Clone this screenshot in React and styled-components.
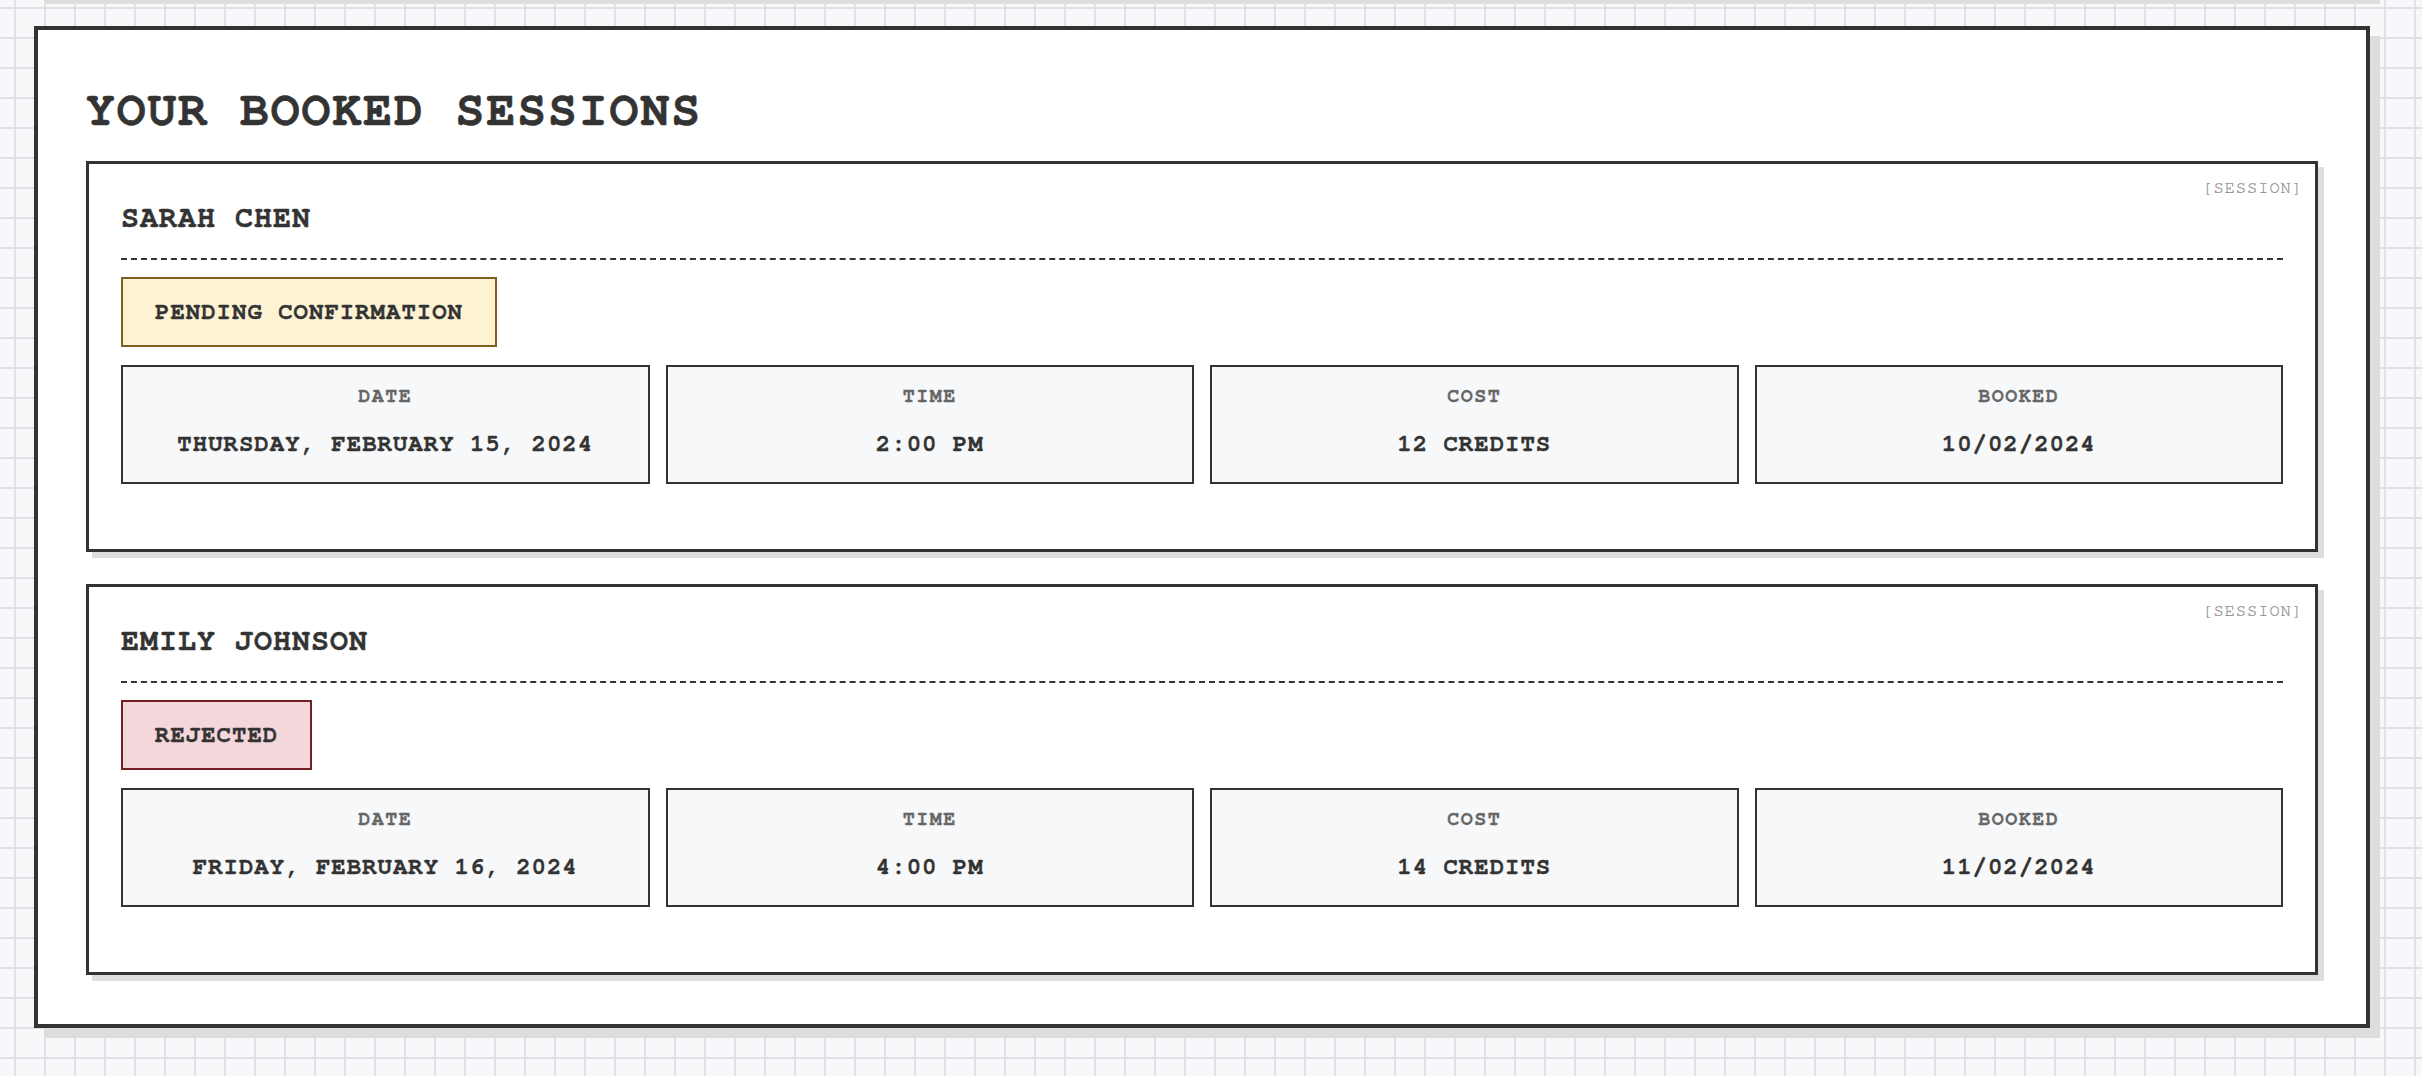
import React from "react";
import styled, { createGlobalStyle } from "styled-components";

const GlobalStyle = createGlobalStyle`
  html, body {
    margin: 0;
    padding: 0;
  }
  body {
    background-color: #f7f8fa;
    background-image:
      linear-gradient(to bottom, #dfe1e5 2px, transparent 2px),
      linear-gradient(to right, #dfe1e5 2px, transparent 2px);
    background-size: 30px 30px;
    background-position: 14px 7px;
    font-family: "Nimbus Mono PS", "Nimbus Mono L", FreeMono, "Courier New", Courier, "Liberation Mono", monospace;
    color: #333;
    overflow: hidden;
  }
`;

const Page = styled.div`
  display: flex;
  flex-direction: column;
  gap: 32px;
  padding: 0 52px 40px 34px;
  margin-top: -214px;
`;

const Panel = styled.section`
  box-sizing: border-box;
  background: #fff;
  border: 4px solid #333;
  box-shadow: 10px 10px 0 #ddd;
  padding: 48px 48px 49px;
  min-height: ${(p) => (p.$height ? `${p.$height}px` : "auto")};
`;

const Title = styled.h2`
  margin: 0 0 17px;
  font-size: 48px;
  line-height: 66px;
  font-weight: 700;
  letter-spacing: 2px;
  text-transform: uppercase;
  -webkit-text-stroke: 0.6px #333;
`;

const CardList = styled.div`
  display: flex;
  flex-direction: column;
  gap: 32px;
`;

const Card = styled.article`
  position: relative;
  background: #fff;
  border: 3px solid #333;
  box-shadow: 6px 6px 0 #ddd;
  padding: 32px;
  display: flex;
  flex-direction: column;
  align-items: flex-start;
`;

const Tag = styled.span`
  position: absolute;
  top: 14px;
  right: 12px;
  font-size: 17px;
  line-height: 20px;
  letter-spacing: 1px;
  color: #8c8c8c;
  -webkit-text-stroke: 0.2px #8c8c8c;
`;

const CardHeader = styled.div`
  align-self: stretch;
  padding-bottom: 18px;
  border-bottom: 2px dashed #333;
  margin-bottom: 17px;
`;

const Name = styled.h3`
  margin: 0;
  font-size: 30px;
  line-height: 44px;
  font-weight: 700;
  letter-spacing: 1px;
  text-transform: uppercase;
  -webkit-text-stroke: 0.4px #333;
`;

const Badge = styled.div`
  padding: 18px 32px;
  font-size: 24px;
  line-height: 30px;
  font-weight: 700;
  letter-spacing: 1px;
  text-transform: uppercase;
  color: #333;
  -webkit-text-stroke: 0.35px #333;
  border: 2px solid ${(p) => (p.$status === "rejected" ? "#722026" : "#806020")};
  background: ${(p) => (p.$status === "rejected" ? "#f3d7da" : "#fdf3d3")};
  margin-bottom: 18px;
`;

const DetailsGrid = styled.div`
  align-self: stretch;
  display: grid;
  grid-template-columns: repeat(4, 1fr);
  gap: 16px;
  margin-bottom: 33px;
`;

const Detail = styled.div`
  border: 2px solid #333;
  background: #f7f8fa;
  padding: 17px 16px 22px;
  text-align: center;
`;

const Label = styled.div`
  font-size: 20px;
  line-height: 24px;
  font-weight: 700;
  letter-spacing: 1.5px;
  color: #666;
  -webkit-text-stroke: 0.3px #666;
  text-transform: uppercase;
  margin-bottom: 20px;
`;

const Value = styled.div`
  font-size: 24px;
  line-height: 32px;
  font-weight: 700;
  letter-spacing: 1px;
  color: #333;
  -webkit-text-stroke: 0.35px #333;
  text-transform: uppercase;
`;

const sessions = [
  {
    name: "Sarah Chen",
    status: "pending",
    statusText: "Pending Confirmation",
    date: "Thursday, February 15, 2024",
    time: "2:00 PM",
    cost: "12 Credits",
    booked: "10/02/2024",
  },
  {
    name: "Emily Johnson",
    status: "rejected",
    statusText: "Rejected",
    date: "Friday, February 16, 2024",
    time: "4:00 PM",
    cost: "14 Credits",
    booked: "11/02/2024",
  },
];

function SessionCard({ s }) {
  const details = [
    ["Date", s.date],
    ["Time", s.time],
    ["Cost", s.cost],
    ["Booked", s.booked],
  ];
  return (
    <Card>
      <Tag>[SESSION]</Tag>
      <CardHeader>
        <Name>{s.name}</Name>
      </CardHeader>
      <Badge $status={s.status}>{s.statusText}</Badge>
      <DetailsGrid>
        {details.map(([label, value]) => (
          <Detail key={label}>
            <Label>{label}</Label>
            <Value>{value}</Value>
          </Detail>
        ))}
      </DetailsGrid>
    </Card>
  );
}

export default function App() {
  return (
    <>
      <GlobalStyle />
      <Page>
        <Panel $height={208} aria-hidden="true" />
        <Panel>
          <Title>Your Booked Sessions</Title>
          <CardList>
            {sessions.map((s) => (
              <SessionCard key={s.name} s={s} />
            ))}
          </CardList>
        </Panel>
      </Page>
    </>
  );
}
